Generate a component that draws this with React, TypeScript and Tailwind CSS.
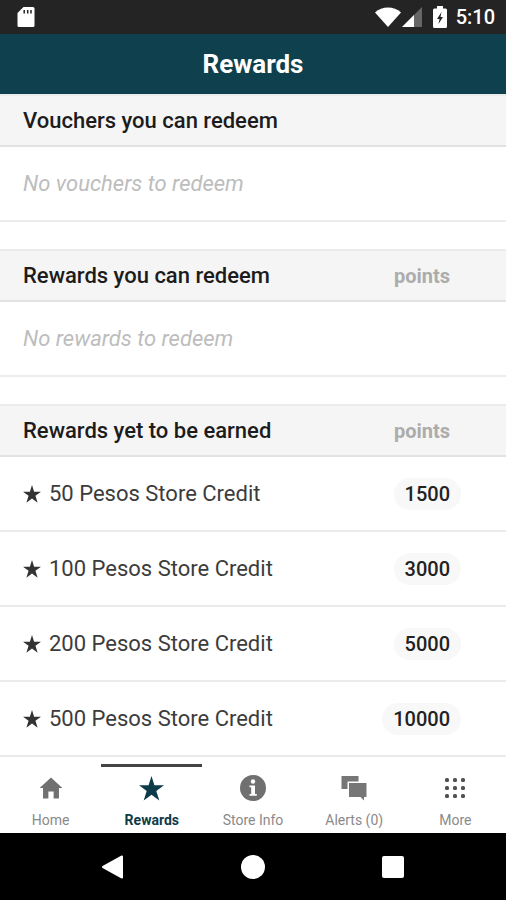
import type { ReactNode } from "react";
import { IoMdHome } from "react-icons/io";

interface Reward {
  name: string;
  points: number;
}

const rewards: Reward[] = [
  { name: "50 Pesos Store Credit", points: 1500 },
  { name: "100 Pesos Store Credit", points: 3000 },
  { name: "200 Pesos Store Credit", points: 5000 },
  { name: "500 Pesos Store Credit", points: 10000 },
];

function StarIcon({ className }: { className: string }) {
  return (
    <svg viewBox="0 0 24 24" fill="currentColor" className={className} aria-hidden="true">
      <path d="M12 0l2.800 8.900H24l-7.400 5.500 2.900 9.200L12 17.900l-7.500 5.700 2.900-9.200L0 8.900h9.200z" />
    </svg>
  );
}

function InfoIcon() {
  return (
    <svg viewBox="0 0 26 26" className="size-[26px]" aria-hidden="true">
      <circle cx="13" cy="13" r="13" fill="#707070" />
      <circle cx="13" cy="6.500" r="2.200" fill="#fff" />
      <path d="M9.500 10.500h5.500v8.500h1.800v1.800H9.500V19h1.700v-6.700H9.500z" fill="#fff" />
    </svg>
  );
}

function ChatIcon() {
  return (
    <svg viewBox="0 0 26 26" fill="#767676" className="size-[26px]" aria-hidden="true">
      <path d="M0.500 1h17v5.500H6.500v7.500h-6z" />
      <path d="M8 8h17.500v14H23v3.500L19.500 22H8z" />
    </svg>
  );
}

function DotsIcon() {
  return (
    <svg viewBox="0 0 26 26" fill="#505050" className="size-[26px]" aria-hidden="true">
      {[5, 13, 21].map((y) =>
        [5, 13, 21].map((x) => (
          <rect key={`${x}-${y}`} x={x - 2} y={y - 2} width="4" height="4" rx="1.500" />
        ))
      )}
    </svg>
  );
}

function StatusBar() {
  return (
    <div className="flex h-[34px] items-center bg-[#242424] pr-[11px] pl-[17px] text-white">
      <svg viewBox="0 0 18 22" className="h-[22px] w-[18px]" aria-hidden="true">
        <path d="M6.500 1H16a1.500 1.500 0 0 1 1.500 1.500v17A1.500 1.500 0 0 1 16 21H2a1.500 1.500 0 0 1-1.500-1.500V7z" fill="#fff" />
        <path d="M7.200 4v3.500M10.700 4v3.500M14 4v3.500" stroke="#242424" strokeWidth="1.500" />
      </svg>
      <div className="ml-auto flex items-center">
        <svg viewBox="0 0 26 20" className="h-5 w-[26px]" aria-hidden="true">
          <path d="M0 5.500C7-1.300 19-1.300 26 5.500L13 20z" fill="#fff" />
        </svg>
        <svg viewBox="0 0 20 20" className="ml-px h-5 w-5" aria-hidden="true">
          <path d="M20 0v20H0z" fill="#666" />
          <path d="M12 8v12H0z" fill="#fff" />
        </svg>
        <svg viewBox="0 0 14 22" className="ml-[11px] h-[22px] w-[14px]" aria-hidden="true">
          <path d="M4 0h6v2.500h2.500A1.500 1.500 0 0 1 14 4v16.500a1.500 1.500 0 0 1-1.500 1.500h-11A1.500 1.500 0 0 1 0 20.500V4a1.500 1.500 0 0 1 1.500-1.500H4z" fill="#fff" />
          <path d="M8.500 6L4 13H6.500l-1 5 4.500-7H7.500z" fill="#242424" />
        </svg>
        <span className="ml-[9px] text-xl font-medium">5:10</span>
      </div>
    </div>
  );
}

interface SectionProps {
  title: string;
  showPoints?: boolean;
  children: ReactNode;
}

function Section({ title, showPoints, children }: SectionProps) {
  return (
    <table className="w-full border-separate border-spacing-0">
      <thead>
        <tr className="h-[53px] bg-[#f5f5f5]">
          <th
            scope="col"
            colSpan={showPoints ? 1 : 2}
            className="border-t-2 border-b-2 border-t-[#ebebeb] border-b-[#e2e2e2] pl-[23px] text-left text-[22px] leading-7 font-medium text-[#1c1c1c]"
          >
            {title}
          </th>
          {showPoints && (
            <th
              scope="col"
              className="border-t-2 border-b-2 border-t-[#ebebeb] border-b-[#e2e2e2] pr-14 text-right text-xl leading-7 font-bold text-[#acacac]"
            >
              points
            </th>
          )}
        </tr>
      </thead>
      <tbody>{children}</tbody>
    </table>
  );
}

function EmptyRow({ text }: { text: string }) {
  return (
    <tr className="h-[75px]">
      <td colSpan={2} className="border-b-2 border-[#ededed] pl-[23px] text-[22px] leading-7 text-[#bdbdbd] italic">
        {text}
      </td>
    </tr>
  );
}

function RewardRow({ reward }: { reward: Reward }) {
  return (
    <tr className="h-[75px]">
      <td className="border-b-2 border-[#ebebeb] pl-[23px] text-[22px] leading-7 text-[#3c3c3c]">
        <div className="flex items-center gap-2">
          <StarIcon className="size-[18px] text-[#333]" />
          {reward.name}
        </div>
      </td>
      <td className="border-b-2 border-[#ebebeb] pr-[45px] text-right">
        <span className="inline-block rounded-full bg-[#f8f8f8] px-[11px] py-[2px] text-xl leading-7 font-medium text-[#222]">
          {reward.points}
        </span>
      </td>
    </tr>
  );
}

function NavItem({ label, icon, active }: { label: string; icon: ReactNode; active?: boolean }) {
  return (
    <a
      href={`#${label.toLowerCase().replace(/\W+/g, "-")}`}
      aria-current={active ? "page" : undefined}
      className={
        active
          ? "flex flex-1 flex-col items-center border-t-[3px] border-[#444] pt-[5px] text-sm font-bold text-[#0d3b4a]"
          : "flex flex-1 flex-col items-center border-t-[3px] border-transparent pt-[5px] text-sm text-[#8a8a8a]"
      }
    >
      <span className="flex h-8 items-center">{icon}</span>
      <span className="mt-1 leading-6">{label}</span>
    </a>
  );
}

export default function App() {
  return (
    <div className="flex min-h-screen flex-col bg-white font-['Roboto',sans-serif]">
      <StatusBar />
      <header className="flex h-[60px] items-center justify-center bg-[#0f404d]">
        <h1 className="text-[26px] leading-8 font-bold text-white">Rewards</h1>
      </header>

      <main className="flex flex-col gap-[27px]">
        <Section title="Vouchers you can redeem">
          <EmptyRow text="No vouchers to redeem" />
        </Section>
        <Section title="Rewards you can redeem" showPoints>
          <EmptyRow text="No rewards to redeem" />
        </Section>
        <Section title="Rewards yet to be earned" showPoints>
          {rewards.map((reward) => (
            <RewardRow key={reward.name} reward={reward} />
          ))}
        </Section>
      </main>

      <nav className="mt-auto flex h-[76px] pt-[7px]">
        <NavItem label="Home" icon={<IoMdHome className="size-[28px] text-[#707070]" />} />
        <NavItem label="Rewards" icon={<StarIcon className="size-[25px]" />} active />
        <NavItem label="Store Info" icon={<InfoIcon />} />
        <NavItem label="Alerts (0)" icon={<ChatIcon />} />
        <NavItem label="More" icon={<DotsIcon />} />
      </nav>

      <div className="flex h-[67px] items-center bg-black px-[43px]">
        <button type="button" aria-label="Back" className="flex flex-1 justify-center">
          <svg viewBox="0 0 24 24" className="size-6">
            <path d="M21 1.500v21L2 12z" fill="#fff" stroke="#fff" strokeWidth="2" strokeLinejoin="round" />
          </svg>
        </button>
        <button type="button" aria-label="Home screen" className="flex flex-1 justify-center">
          <span className="size-6 rounded-full bg-white" />
        </button>
        <button type="button" aria-label="Recent apps" className="flex flex-1 justify-center">
          <span className="size-[22px] rounded-[2px] bg-white" />
        </button>
      </div>
    </div>
  );
}
